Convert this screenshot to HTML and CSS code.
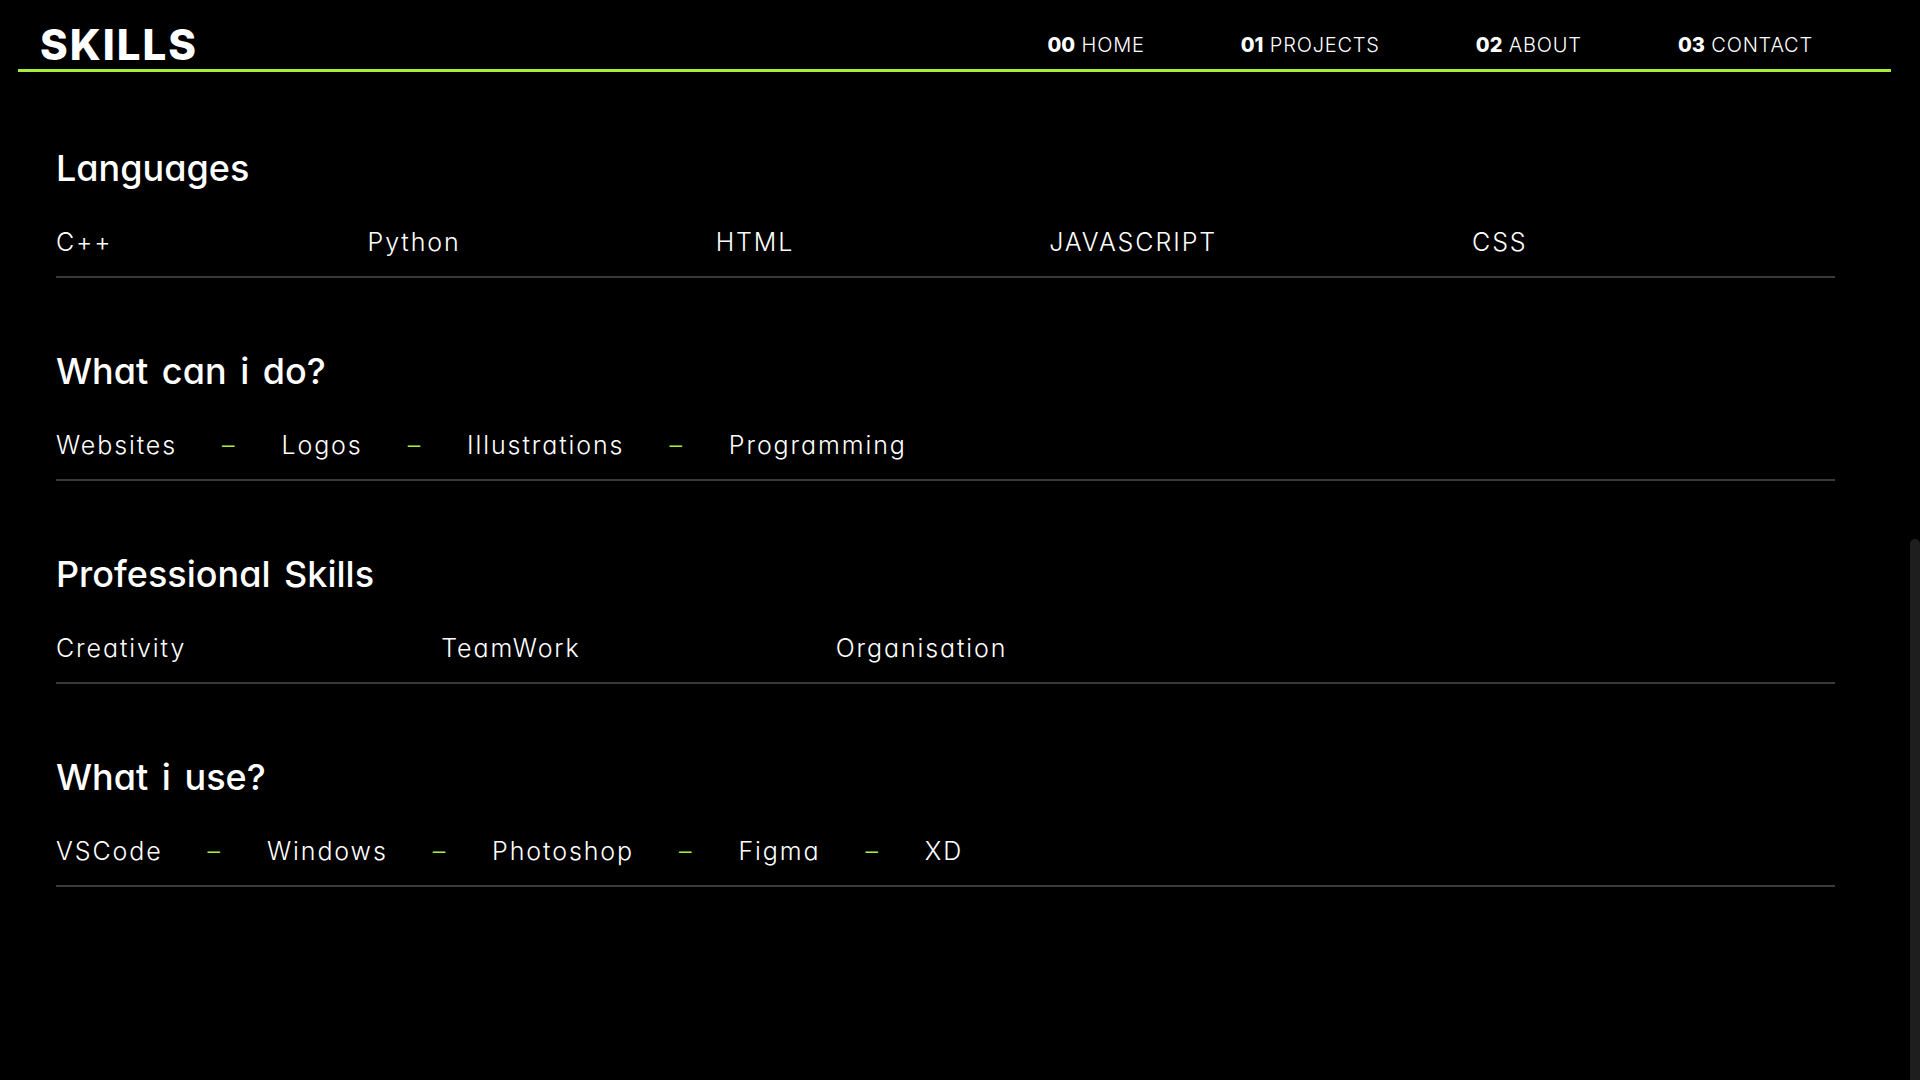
FILE: index.html
```html
<!DOCTYPE html>
<html lang="en">
<head>
<meta charset="utf-8">
<title>Skills</title>
<link rel="stylesheet" href="styles.css">
</head>
<body>
<header class="topbar">
  <div class="logo">SKILLS</div>
  <nav class="nav">
    <a class="nav-link" href="#"><span class="nav-num">00</span> HOME</a>
    <a class="nav-link" href="#"><span class="nav-num">01</span> PROJECTS</a>
    <a class="nav-link" href="#"><span class="nav-num">02</span> ABOUT</a>
    <a class="nav-link" href="#"><span class="nav-num">03</span> CONTACT</a>
  </nav>
</header>
<main class="content">
  <section class="block">
    <h2 class="block-title">Languages</h2>
    <ul class="row row-wide">
      <li>C++</li>
      <li>Python</li>
      <li>HTML</li>
      <li>JAVASCRIPT</li>
      <li>CSS</li>
    </ul>
  </section>
  <section class="block">
    <h2 class="block-title">What can i do?</h2>
    <ul class="row">
      <li>Websites</li><li class="sep">–</li>
      <li>Logos</li><li class="sep">–</li>
      <li>Illustrations</li><li class="sep">–</li>
      <li>Programming</li>
    </ul>
  </section>
  <section class="block">
    <h2 class="block-title">Professional Skills</h2>
    <ul class="row row-wide">
      <li>Creativity</li>
      <li>TeamWork</li>
      <li>Organisation</li>
    </ul>
  </section>
  <section class="block">
    <h2 class="block-title">What i use?</h2>
    <ul class="row">
      <li>VSCode</li><li class="sep">–</li>
      <li>Windows</li><li class="sep">–</li>
      <li>Photoshop</li><li class="sep">–</li>
      <li>Figma</li><li class="sep">–</li>
      <li>XD</li>
    </ul>
  </section>
</main>
<div class="scroll-thumb"></div>
</body>
</html>
```
FILE: styles.css
```css
* { box-sizing: border-box; }
html, body {
  margin: 0;
  padding: 0;
  background: #000;
  color: #fff;
  font-family: Inter, "Noto Sans", sans-serif;
  font-feature-settings: "cv11" 1;
}
body {
  width: 1910px;
  height: 1080px;
  overflow: hidden;
}
.topbar {
  margin: 0 19px 0 18px;
  height: 72px;
  padding: 20px 78px 0 22px;
  border-bottom: 3px solid #a9ec3b;
  display: flex;
  align-items: center;
  justify-content: space-between;
}
.logo {
  font-size: 42px;
  line-height: 1;
  font-weight: 800;
  letter-spacing: 2px;
}
.nav {
  display: flex;
  gap: 96px;
  align-items: center;
}
.nav-link {
  color: #fff;
  text-decoration: none;
  font-size: 20px;
  line-height: 1;
  font-weight: 300;
  letter-spacing: 0.8px;
}
.nav-num {
  font-weight: 800;
  letter-spacing: 0;
}
.content {
  padding: 74px 75px 0 56px;
}
.block {
  border-bottom: 2px solid #3a3a3a;
  padding-bottom: 19px;
  margin-bottom: 71px;
}
.block-title {
  margin: 0 0 37px;
  font-size: 36px;
  line-height: 44px;
  font-weight: 500;
  letter-spacing: 0;
  word-spacing: 4px;
}
.row {
  list-style: none;
  margin: 0;
  padding: 0;
  display: flex;
  font-size: 25px;
  line-height: 30px;
  font-weight: 300;
  letter-spacing: 1.9px;
}
.row-wide { gap: 255px; }
.sep {
  color: #a9ec3b;
  margin: 0 45px;
}
.scroll-thumb {
  position: fixed;
  right: 0;
  top: 539px;
  bottom: 0;
  width: 10px;
  background: #1e1e1e;
  border-radius: 5px 5px 0 0;
}
```
